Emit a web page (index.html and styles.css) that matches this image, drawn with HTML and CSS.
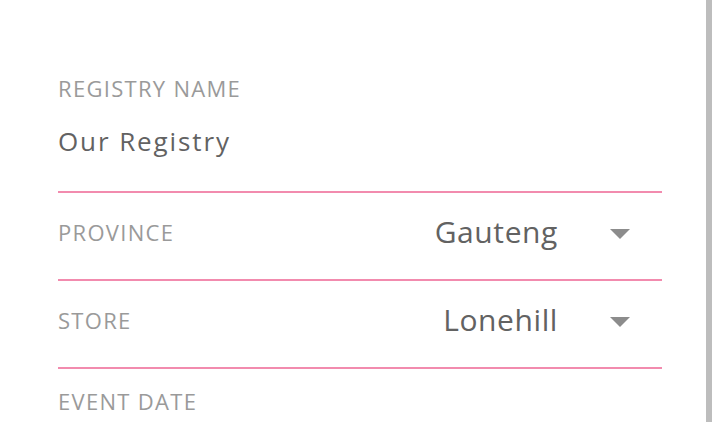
FILE: index.html
```html
<!DOCTYPE html>
<html>
<head>
<meta charset="utf-8">
<link rel="stylesheet" href="styles.css">
</head>
<body>
<form class="form">
  <div class="field">
    <label class="label">REGISTRY NAME</label>
    <div class="text-value">Our Registry</div>
  </div>
  <div class="row">
    <label class="label">PROVINCE</label>
    <div class="select">
      <span class="select-value">Gauteng</span>
      <span class="caret"></span>
    </div>
  </div>
  <div class="row">
    <label class="label">STORE</label>
    <div class="select">
      <span class="select-value">Lonehill</span>
      <span class="caret"></span>
    </div>
  </div>
  <div class="field last">
    <label class="label">EVENT DATE</label>
  </div>
</form>
<div class="scroll-thumb"></div>
</body>
</html>
```
FILE: styles.css
```css
html, body {
  margin: 0;
  padding: 0;
  background: #ffffff;
  height: 100%;
  overflow: hidden;
}
body {
  font-family: "Open Sans", "DejaVu Sans", sans-serif;
}
.form {
  width: 604px;
  margin: 0 0 0 58px;
  padding-top: 76px;
}
.label {
  display: block;
  font-size: 22px;
  line-height: 24px;
  color: #9a9a9a;
  letter-spacing: 1.3px;
}
.field {
  border-bottom: 2px solid #f28bae;
  padding-bottom: 32px;
}
.text-value {
  margin-top: 23px;
  font-size: 26px;
  line-height: 36px;
  color: #626262;
  letter-spacing: 1.9px;
}
.row {
  display: flex;
  align-items: center;
  justify-content: space-between;
  height: 86px;
  border-bottom: 2px solid #f28bae;
  box-sizing: content-box;
}
.row .label {
  margin-top: -9px;
}
.select {
  display: flex;
  align-items: center;
  margin-right: 32px;
}
.select-value {
  font-size: 30px;
  line-height: 36px;
  color: #626262;
  margin-top: -8px;
  letter-spacing: 0.6px;
}
.caret {
  width: 0;
  height: 0;
  margin-left: 52px;
  margin-top: -4px;
  border-left: 10px solid transparent;
  border-right: 10px solid transparent;
  border-top: 10px solid #8c8c8c;
}
.field.last {
  border-bottom: none;
  padding-top: 20px;
  padding-bottom: 0;
}
.scroll-thumb {
  position: fixed;
  top: 0;
  right: 8px;
  width: 6px;
  height: 422px;
  background: #bdbdbd;
}
```
